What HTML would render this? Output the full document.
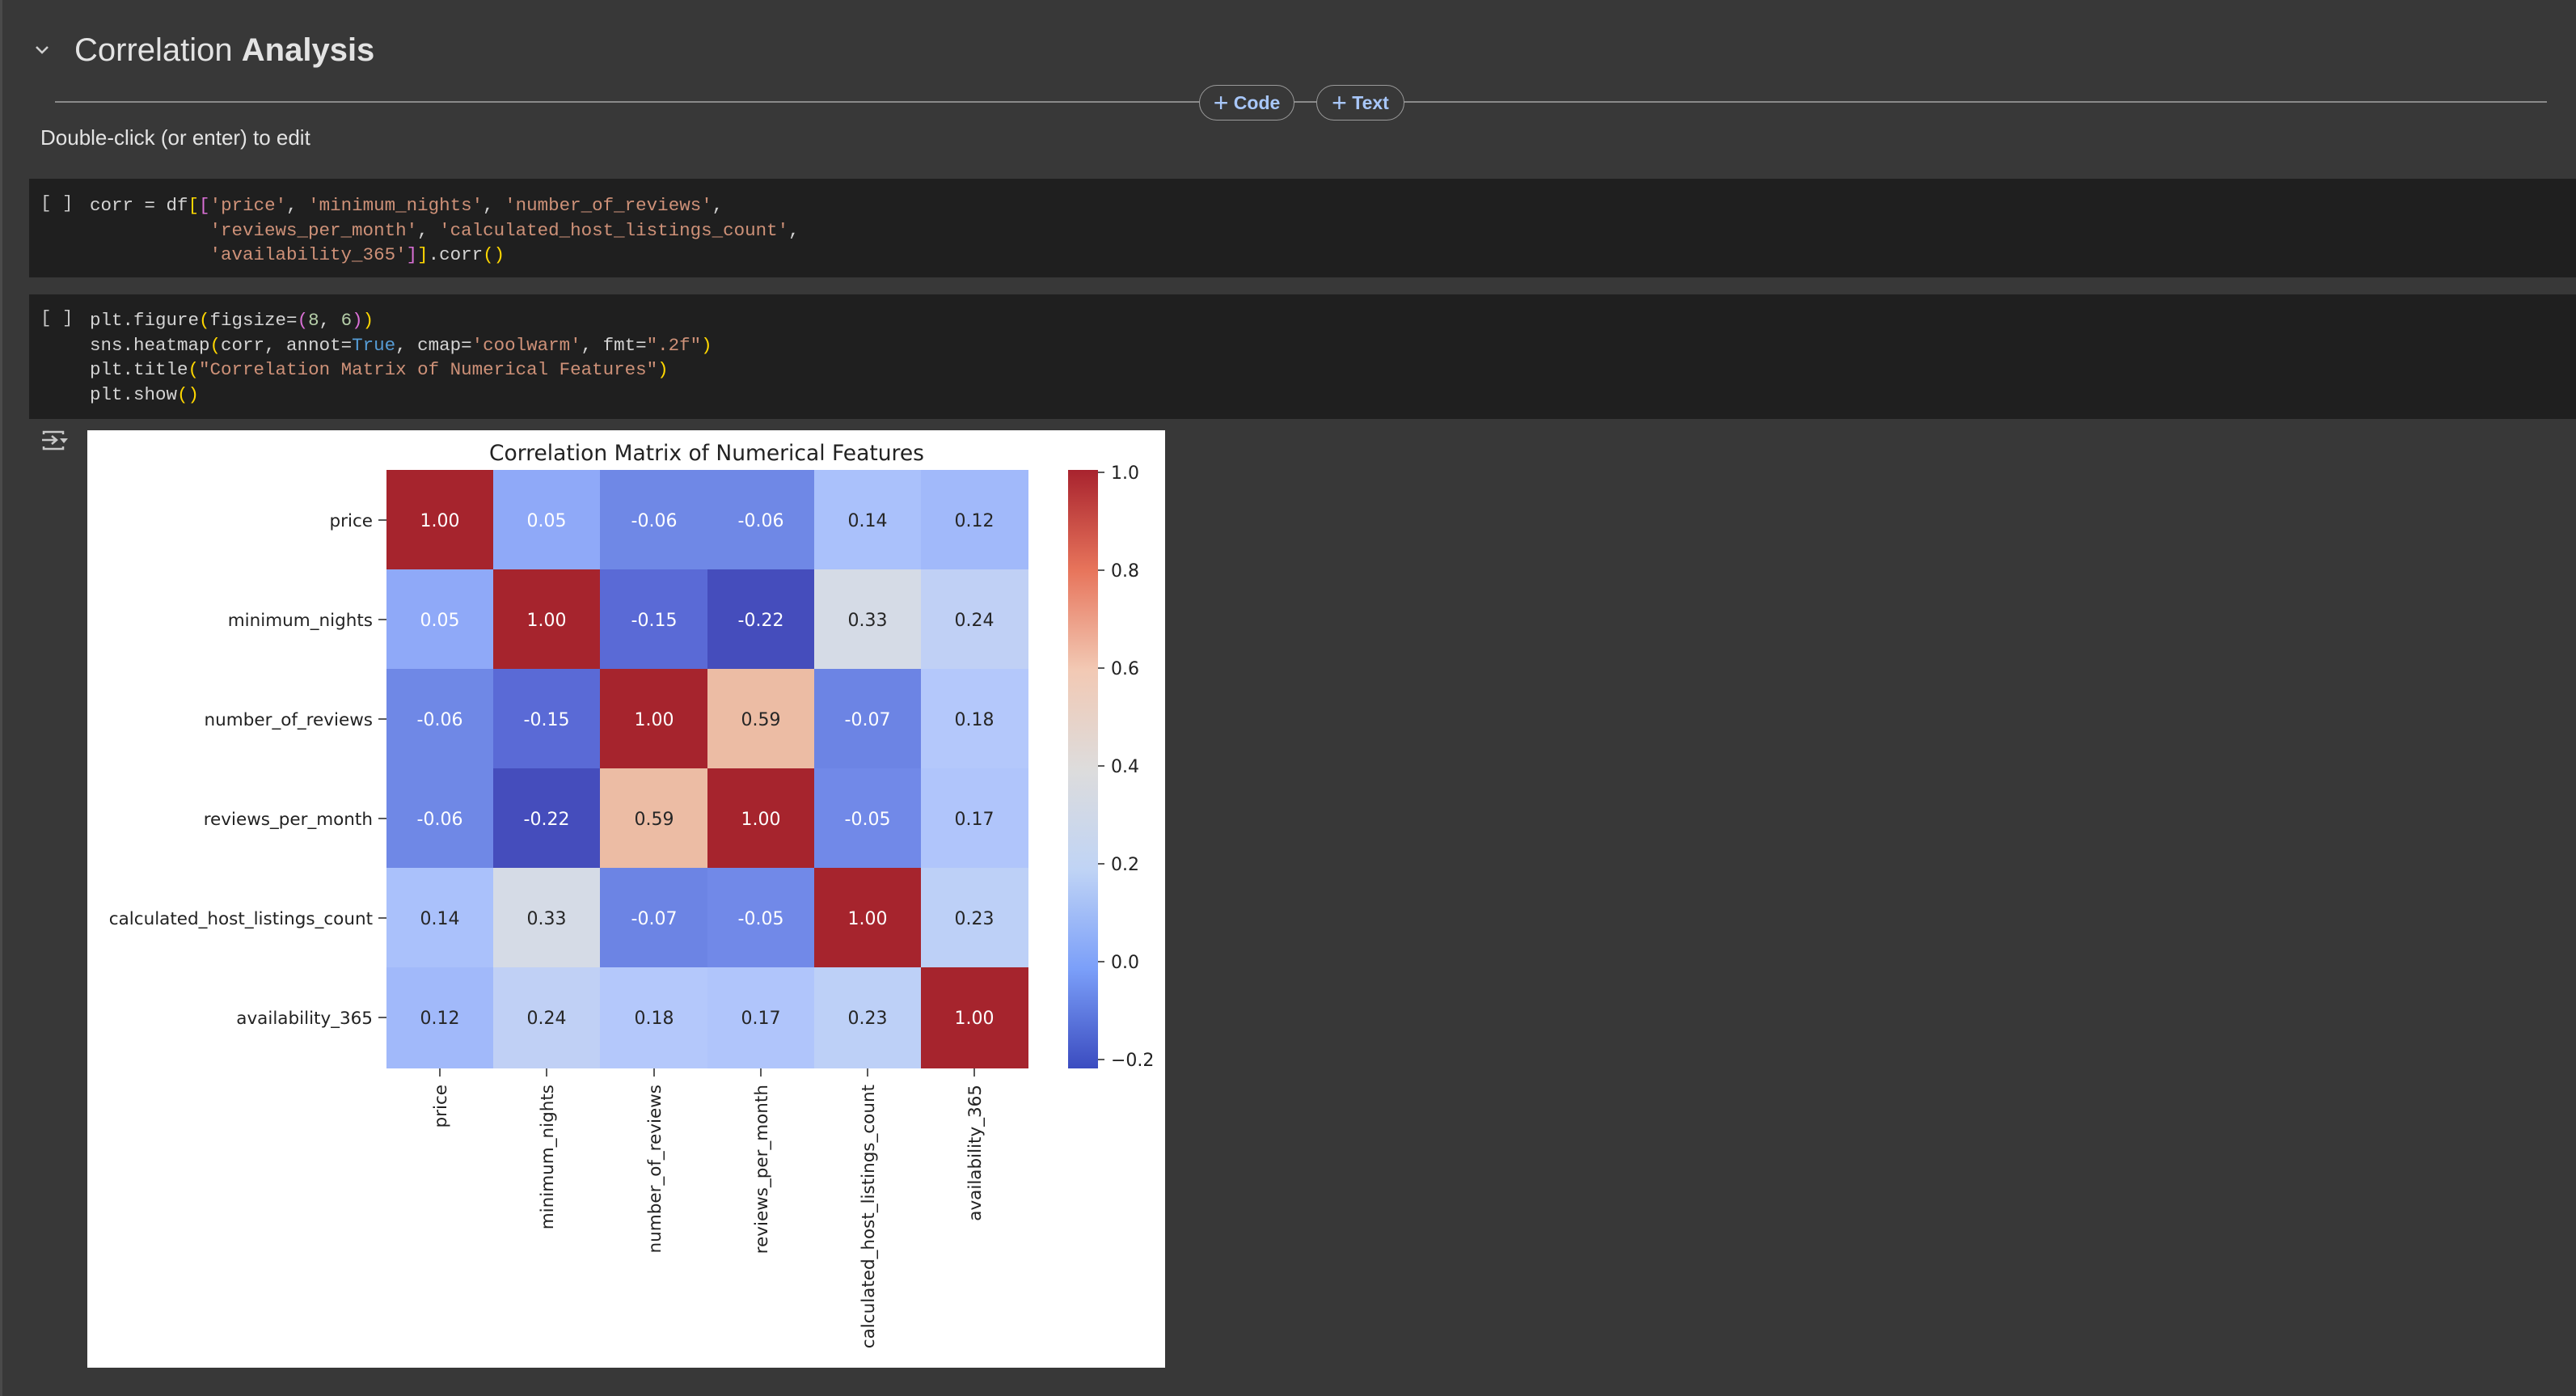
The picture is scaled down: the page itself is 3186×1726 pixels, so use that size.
<!DOCTYPE html>
<html><head><meta charset="utf-8"><style>
html,body{margin:0;padding:0;width:3186px;height:1726px;background:#383838;overflow:hidden;font-family:"Liberation Sans",sans-serif;}
.lb{position:absolute;left:0;top:0;width:3px;height:1726px;background:#4a4a4a}
.h{position:absolute;left:92px;top:40px;font-size:40px;color:#e3e3e3;white-space:nowrap}
.chev{position:absolute;left:42px;top:55px}
.line{position:absolute;left:68px;top:125px;width:3082px;height:2px;background:#8a8a8a}
.btn{position:absolute;top:105px;height:42px;border:1.5px solid #9a9a9a;border-radius:22px;background:#383838;color:#a8c7fa;font-weight:bold;font-size:23px;line-height:42px;text-align:center;box-sizing:content-box}
.btn span{font-size:32px;font-weight:normal;vertical-align:-3px}
.dc{position:absolute;left:50px;top:155px;font-size:26px;color:#e3e3e3}
.cell{position:absolute;left:36px;right:0;background:#1f1f1f}
.code{position:absolute;font-family:"Liberation Mono",monospace;font-size:22.5px;line-height:30.5px;color:#d4d4d4;white-space:pre}
.br{position:absolute;left:50px;font-family:"Liberation Mono",monospace;font-size:22.5px;color:#c8c8c8}
.s{color:#ce9178}.y{color:#ffd700}.m{color:#da70d6}.n{color:#b5cea8}.k{color:#569cd6}
</style></head><body>
<div class="lb"></div>
<svg class="chev" width="20" height="14" viewBox="0 0 20 14"><path d="M3 3 L10 10 L17 3" stroke="#d0d0d0" stroke-width="2.5" fill="none"/></svg>
<div class="h">Correlation <b>Analysis</b></div>
<div class="line"></div>
<div class="btn" style="left:1483px;width:116px"><span>+</span> Code</div>
<div class="btn" style="left:1628px;width:107px"><span>+</span> Text</div>
<div class="dc">Double-click (or enter) to edit</div>

<div class="cell" style="top:221px;height:122px"></div>
<div class="br" style="top:238px">[ ]</div>
<div class="code" style="left:111px;top:239px">corr = df<span class="y">[</span><span class="m">[</span><span class="s">'price'</span>, <span class="s">'minimum_nights'</span>, <span class="s">'number_of_reviews'</span>,
           <span class="s">'reviews_per_month'</span>, <span class="s">'calculated_host_listings_count'</span>,
           <span class="s">'availability_365'</span><span class="m">]</span><span class="y">]</span>.corr<span class="y">()</span></div>

<div class="cell" style="top:364px;height:154px"></div>
<div class="br" style="top:380px">[ ]</div>
<div class="code" style="left:111px;top:381px">plt.figure<span class="y">(</span>figsize=<span class="m">(</span><span class="n">8</span>, <span class="n">6</span><span class="m">)</span><span class="y">)</span>
sns.heatmap<span class="y">(</span>corr, annot=<span class="k">True</span>, cmap=<span class="s">'coolwarm'</span>, fmt=<span class="s">".2f"</span><span class="y">)</span>
plt.title<span class="y">(</span><span class="s">"Correlation Matrix of Numerical Features"</span><span class="y">)</span>
plt.show<span class="y">()</span></div>

<svg style="position:absolute;left:50px;top:531px" width="36" height="30" viewBox="0 0 36 30">
<path d="M4 6 V3 H28 V6 M4 21 V24 H28 V21" stroke="#c8c8c8" stroke-width="2.5" fill="none"/>
<path d="M2 13 H20 M14 8 L20 13 L14 18" stroke="#c8c8c8" stroke-width="2.5" fill="none"/>
<path d="M24 11 H34 L29 17 Z" fill="#c8c8c8"/>
</svg>

<svg style="position:absolute;left:108px;top:532px" width="1333" height="1159" viewBox="108 532 1333 1159" font-family="DejaVu Sans, Liberation Sans, sans-serif">
<defs><linearGradient id="cb" x1="0" y1="1" x2="0" y2="0">
<stop offset="0" stop-color="#3b4cc0"/><stop offset="0.166" stop-color="#7b9ff9"/><stop offset="0.333" stop-color="#c0d4f5"/><stop offset="0.5" stop-color="#dddcdc"/><stop offset="0.666" stop-color="#f2c9b4"/><stop offset="0.833" stop-color="#e7745b"/><stop offset="1" stop-color="#a8232e"/>
</linearGradient></defs>
<rect x="108" y="532" width="1333" height="1159" fill="#fff"/>
<text x="874" y="569" font-size="26.5" text-anchor="middle" fill="#222">Correlation Matrix of Numerical Features</text>
<rect x="1321" y="581" width="37" height="740" fill="url(#cb)"/>
<g font-size="22" fill="#222">
<line x1="1358" y1="584" x2="1366" y2="584" stroke="#222" stroke-width="1.5"/><text x="1374" y="592">1.0</text>
<line x1="1358" y1="705" x2="1366" y2="705" stroke="#222" stroke-width="1.5"/><text x="1374" y="713">0.8</text>
<line x1="1358" y1="826" x2="1366" y2="826" stroke="#222" stroke-width="1.5"/><text x="1374" y="834">0.6</text>
<line x1="1358" y1="947" x2="1366" y2="947" stroke="#222" stroke-width="1.5"/><text x="1374" y="955">0.4</text>
<line x1="1358" y1="1068" x2="1366" y2="1068" stroke="#222" stroke-width="1.5"/><text x="1374" y="1076">0.2</text>
<line x1="1358" y1="1189" x2="1366" y2="1189" stroke="#222" stroke-width="1.5"/><text x="1374" y="1197">0.0</text>
<line x1="1358" y1="1310" x2="1366" y2="1310" stroke="#222" stroke-width="1.5"/><text x="1374" y="1318">−0.2</text>
</g>
<g font-size="21.5" fill="#222" text-anchor="end">
<text x="461" y="651">price</text><line x1="468" y1="643" x2="478" y2="643" stroke="#222" stroke-width="1.5"/>
<text x="461" y="774">minimum_nights</text><line x1="468" y1="766" x2="478" y2="766" stroke="#222" stroke-width="1.5"/>
<text x="461" y="897">number_of_reviews</text><line x1="468" y1="889" x2="478" y2="889" stroke="#222" stroke-width="1.5"/>
<text x="461" y="1020">reviews_per_month</text><line x1="468" y1="1012" x2="478" y2="1012" stroke="#222" stroke-width="1.5"/>
<text x="461" y="1143">calculated_host_listings_count</text><line x1="468" y1="1135" x2="478" y2="1135" stroke="#222" stroke-width="1.5"/>
<text x="461" y="1266">availability_365</text><line x1="468" y1="1258" x2="478" y2="1258" stroke="#222" stroke-width="1.5"/>
</g>
<g font-size="21.5" fill="#222" text-anchor="end">
<g transform="translate(552,1341) rotate(-90)"><text x="0" y="0">price</text></g>
<g transform="translate(684,1341) rotate(-90)"><text x="0" y="0">minimum_nights</text></g>
<g transform="translate(817,1341) rotate(-90)"><text x="0" y="0">number_of_reviews</text></g>
<g transform="translate(949,1341) rotate(-90)"><text x="0" y="0">reviews_per_month</text></g>
<g transform="translate(1081,1341) rotate(-90)"><text x="0" y="0">calculated_host_listings_count</text></g>
<g transform="translate(1213,1341) rotate(-90)"><text x="0" y="0">availability_365</text></g>
<g stroke="#222" stroke-width="1.5">
<line x1="544" y1="1321" x2="544" y2="1331"/><line x1="676" y1="1321" x2="676" y2="1331"/><line x1="809" y1="1321" x2="809" y2="1331"/><line x1="941" y1="1321" x2="941" y2="1331"/><line x1="1073" y1="1321" x2="1073" y2="1331"/><line x1="1205" y1="1321" x2="1205" y2="1331"/>
</g>
</g>
<g font-size="22" text-anchor="middle">
<rect x="478" y="581" width="133" height="124" fill="#a6242d"/><text x="544" y="651" fill="#fff">1.00</text>
<rect x="610" y="581" width="133" height="124" fill="#8fa9f8"/><text x="676" y="651" fill="#fff">0.05</text>
<rect x="742" y="581" width="133" height="124" fill="#6f88e6"/><text x="809" y="651" fill="#fff">-0.06</text>
<rect x="875" y="581" width="133" height="124" fill="#6f88e6"/><text x="941" y="651" fill="#fff">-0.06</text>
<rect x="1007" y="581" width="133" height="124" fill="#aac1fb"/><text x="1073" y="651" fill="#262626">0.14</text>
<rect x="1139" y="581" width="133" height="124" fill="#a1b9fa"/><text x="1205" y="651" fill="#262626">0.12</text>
<rect x="478" y="704" width="133" height="124" fill="#8fa9f8"/><text x="544" y="774" fill="#fff">0.05</text>
<rect x="610" y="704" width="133" height="124" fill="#a6242d"/><text x="676" y="774" fill="#fff">1.00</text>
<rect x="742" y="704" width="133" height="124" fill="#5a6ad6"/><text x="809" y="774" fill="#fff">-0.15</text>
<rect x="875" y="704" width="133" height="124" fill="#454dbc"/><text x="941" y="774" fill="#fff">-0.22</text>
<rect x="1007" y="704" width="133" height="124" fill="#d5dbe6"/><text x="1073" y="774" fill="#262626">0.33</text>
<rect x="1139" y="704" width="133" height="124" fill="#c0d0f5"/><text x="1205" y="774" fill="#262626">0.24</text>
<rect x="478" y="827" width="133" height="124" fill="#6f88e6"/><text x="544" y="897" fill="#fff">-0.06</text>
<rect x="610" y="827" width="133" height="124" fill="#5a6ad6"/><text x="676" y="897" fill="#fff">-0.15</text>
<rect x="742" y="827" width="133" height="124" fill="#a6242d"/><text x="809" y="897" fill="#fff">1.00</text>
<rect x="875" y="827" width="133" height="124" fill="#ecbca4"/><text x="941" y="897" fill="#262626">0.59</text>
<rect x="1007" y="827" width="133" height="124" fill="#6c84e4"/><text x="1073" y="897" fill="#fff">-0.07</text>
<rect x="1139" y="827" width="133" height="124" fill="#b4c8fb"/><text x="1205" y="897" fill="#262626">0.18</text>
<rect x="478" y="950" width="133" height="124" fill="#6f88e6"/><text x="544" y="1020" fill="#fff">-0.06</text>
<rect x="610" y="950" width="133" height="124" fill="#454dbc"/><text x="676" y="1020" fill="#fff">-0.22</text>
<rect x="742" y="950" width="133" height="124" fill="#ecbca4"/><text x="809" y="1020" fill="#262626">0.59</text>
<rect x="875" y="950" width="133" height="124" fill="#a6242d"/><text x="941" y="1020" fill="#fff">1.00</text>
<rect x="1007" y="950" width="133" height="124" fill="#7189e8"/><text x="1073" y="1020" fill="#fff">-0.05</text>
<rect x="1139" y="950" width="133" height="124" fill="#b0c5fb"/><text x="1205" y="1020" fill="#262626">0.17</text>
<rect x="478" y="1073" width="133" height="124" fill="#aac1fb"/><text x="544" y="1143" fill="#262626">0.14</text>
<rect x="610" y="1073" width="133" height="124" fill="#d5dbe6"/><text x="676" y="1143" fill="#262626">0.33</text>
<rect x="742" y="1073" width="133" height="124" fill="#6c84e4"/><text x="809" y="1143" fill="#fff">-0.07</text>
<rect x="875" y="1073" width="133" height="124" fill="#7189e8"/><text x="941" y="1143" fill="#fff">-0.05</text>
<rect x="1007" y="1073" width="133" height="124" fill="#a6242d"/><text x="1073" y="1143" fill="#fff">1.00</text>
<rect x="1139" y="1073" width="133" height="124" fill="#bdd0f7"/><text x="1205" y="1143" fill="#262626">0.23</text>
<rect x="478" y="1196" width="133" height="125" fill="#a1b9fa"/><text x="544" y="1266" fill="#262626">0.12</text>
<rect x="610" y="1196" width="133" height="125" fill="#c0d0f5"/><text x="676" y="1266" fill="#262626">0.24</text>
<rect x="742" y="1196" width="133" height="125" fill="#b4c8fb"/><text x="809" y="1266" fill="#262626">0.18</text>
<rect x="875" y="1196" width="133" height="125" fill="#b0c5fb"/><text x="941" y="1266" fill="#262626">0.17</text>
<rect x="1007" y="1196" width="133" height="125" fill="#bdd0f7"/><text x="1073" y="1266" fill="#262626">0.23</text>
<rect x="1139" y="1196" width="133" height="125" fill="#a6242d"/><text x="1205" y="1266" fill="#fff">1.00</text>
</g>
</svg>
</body></html>
